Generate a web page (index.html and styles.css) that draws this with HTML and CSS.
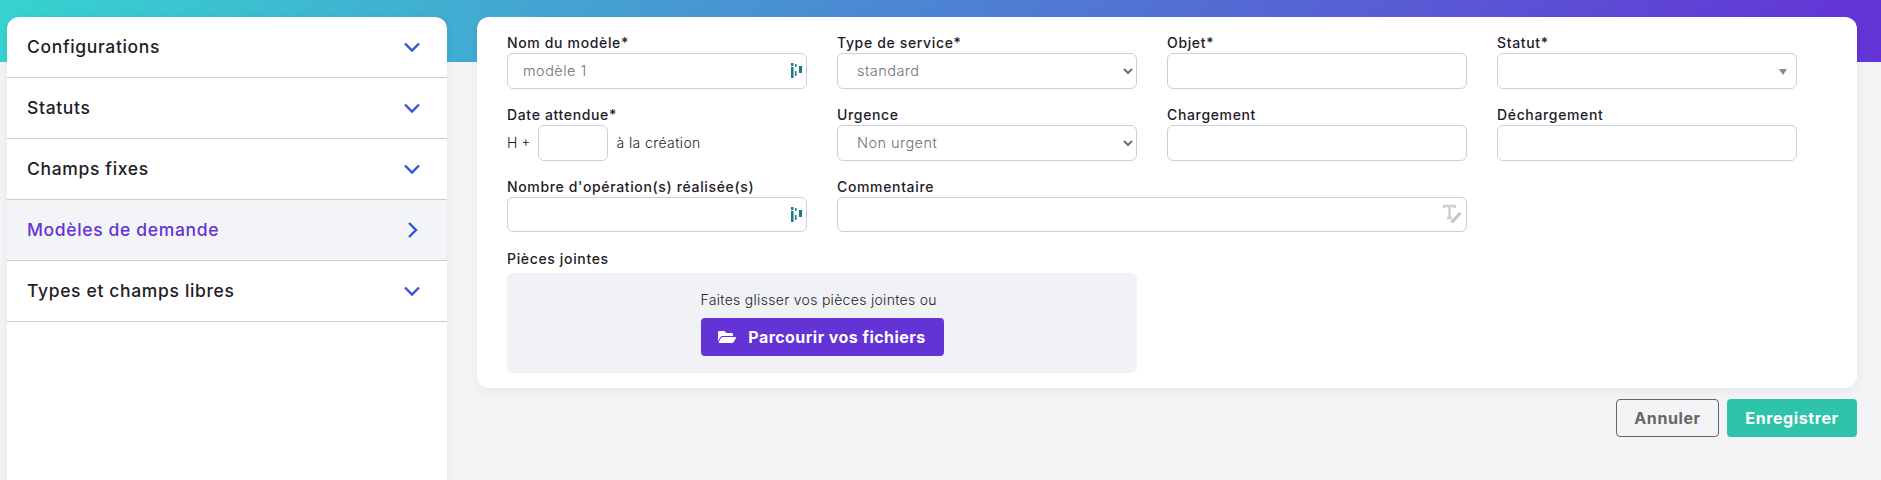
FILE: index.html
```html
<!doctype html>
<html>
<head>
<title>Modèles de demande</title>
<link rel="stylesheet" href="styles.css">
</head>
<body>
<div class="page">

  <!-- menu on the left -->
  <nav class="sidebar">
    <div class="menu-row">
      <span>Configurations</span>
      <svg class="chevron" viewBox="0 0 18 12"><path d="M2 2.5 9 9.5 16 2.5"/></svg>
    </div>
    <div class="menu-row">
      <span>Statuts</span>
      <svg class="chevron" viewBox="0 0 18 12"><path d="M2 2.5 9 9.5 16 2.5"/></svg>
    </div>
    <div class="menu-row">
      <span>Champs fixes</span>
      <svg class="chevron" viewBox="0 0 18 12"><path d="M2 2.5 9 9.5 16 2.5"/></svg>
    </div>
    <div class="menu-row active">
      <span>Modèles de demande</span>
      <svg class="chevron" viewBox="0 0 18 18"><path d="M6 2 13 9 6 16"/></svg>
    </div>
    <div class="menu-row">
      <span>Types et champs libres</span>
      <svg class="chevron" viewBox="0 0 18 12"><path d="M2 2.5 9 9.5 16 2.5"/></svg>
    </div>
  </nav>

  <main class="content">
    <form class="card">
      <div class="form-grid">

        <div class="field">
          <label>Nom du modèle*</label>
          <div class="input-wrap">
            <input class="control" type="text" value="modèle 1">
            <svg class="num-icon" viewBox="0 0 11 15">
              <rect x="0" y="0" width="2.5" height="3"/><rect x="0" y="4" width="2.5" height="11"/>
              <rect x="4" y="1" width="1.5" height="3"/><rect x="4" y="8" width="1.5" height="5"/>
              <rect x="8" y="3" width="3" height="7"/>
            </svg>
          </div>
        </div>

        <div class="field">
          <label>Type de service*</label>
          <select class="control select"><option>standard</option></select>
        </div>

        <div class="field">
          <label>Objet*</label>
          <input class="control" type="text">
        </div>

        <div class="field">
          <label>Statut*</label>
          <div class="input-wrap">
            <div class="control"></div>
            <span class="caret"></span>
          </div>
        </div>

        <div class="field">
          <label>Date attendue*</label>
          <div class="delay">
            <span class="delay-prefix">H +</span>
            <input class="control delay-input" type="text">
            <span>à la création</span>
          </div>
        </div>

        <div class="field">
          <label>Urgence</label>
          <select class="control select"><option>Non urgent</option></select>
        </div>

        <div class="field">
          <label>Chargement</label>
          <input class="control" type="text">
        </div>

        <div class="field">
          <label>Déchargement</label>
          <input class="control" type="text">
        </div>

        <div class="field">
          <label>Nombre d'opération(s) réalisée(s)</label>
          <div class="input-wrap">
            <input class="control short" type="text">
            <svg class="num-icon" viewBox="0 0 11 15">
              <rect x="0" y="0" width="2.5" height="3"/><rect x="0" y="4" width="2.5" height="11"/>
              <rect x="4" y="1" width="1.5" height="3"/><rect x="4" y="8" width="1.5" height="5"/>
              <rect x="8" y="3" width="3" height="7"/>
            </svg>
          </div>
        </div>

        <div class="field wide">
          <label>Commentaire</label>
          <div class="input-wrap">
            <input class="control short" type="text">
            <svg class="text-icon" viewBox="0 0 22 22">
              <path class="t-shape" d="M1 5V3H12V5M6.5 3V15M4 15H9"/>
              <path class="pen" d="M8.5 19.5 17.5 10"/>
            </svg>
          </div>
        </div>

        <div class="field wide attachments">
          <label>Pièces jointes</label>
          <div class="dropzone">
            <div class="drop-inner">
              <span>Faites glisser vos pièces jointes ou</span>
              <button class="browse" type="button">
                <svg class="folder" viewBox="0 0 576 512"><path d="M572.694 292.093L500.27 416.248A63.997 63.997 0 0 1 444.989 448H45.025c-18.523 0-30.064-20.093-20.731-36.093l72.424-124.155A64 64 0 0 1 152 256h399.964c18.523 0 30.064 20.093 20.73 36.093zM152 224h328v-48c0-26.51-21.49-48-48-48H272l-64-64H48C21.49 64 0 85.49 0 112v278.046l69.077-118.418C86.214 242.25 117.989 224 152 224z"/></svg>
                Parcourir vos fichiers
              </button>
            </div>
          </div>
        </div>

      </div>
    </form>

    <div class="actions">
      <button class="btn btn-cancel" type="button">Annuler</button>
      <button class="btn btn-save" type="button">Enregistrer</button>
    </div>
  </main>

</div>
</body>
</html>
```
FILE: styles.css
```css
* {
  box-sizing: border-box;
}

html, body {
  margin: 0;
  height: 100%;
}

body {
  font-family: Inter, "Open Sans", sans-serif;
  color: #1f2027;
  overflow: hidden;
}

/* the gradient band sits behind the sidebar and the card */
.page {
  display: flex;
  gap: 30px;
  height: 100vh;
  padding: 17px 24px 0 7px;
  background:
    linear-gradient(to right, #36d3d0, #6433d6) top left / 100% 62px no-repeat,
    #f4f4f7;
}

/* sidebar */
.sidebar {
  width: 440px;
  flex: none;
  background: #fff;
  border-radius: 12px 12px 0 0;
  box-shadow: 0 2px 10px rgba(0, 0, 0, 0.06);
  overflow: hidden;
}

.menu-row {
  display: flex;
  justify-content: space-between;
  align-items: center;
  height: 61px;
  padding: 0 26px 0 20px;
  border-bottom: 1px solid #cccccc;
  font-size: 17.5px;
  font-weight: 500;
  letter-spacing: 0.65px;
}

.menu-row span {
  margin-bottom: 2px;
}

.menu-row.active {
  background: #f3f4f7;
  color: #6433d6;
}

.chevron {
  width: 18px;
  height: 18px;
  fill: none;
  stroke: #3353d8;
  stroke-width: 2.4;
}

/* main card */
.content {
  flex: 1;
  min-width: 0;
}

.card {
  height: 371px;
  padding: 18px 30px 0;
  background: #fff;
  border-radius: 12px;
  box-shadow: 0 4px 12px rgba(0, 0, 0, 0.05);
}

.form-grid {
  display: grid;
  grid-template-columns: repeat(4, 300px);
  column-gap: 30px;
  row-gap: 0;
  align-content: start;
}

.field {
  height: 72px;
  display: flex;
  flex-direction: column;
}

.field.wide {
  grid-column: span 2;
}

.field.attachments {
  grid-column: 1 / span 2;
  height: auto;
}

.field label {
  height: 18px;
  line-height: 16px;
  font-size: 14px;
  font-weight: 500;
  letter-spacing: 0.65px;
  white-space: nowrap;
}

.attachments label {
  height: 22px;
}

.input-wrap {
  position: relative;
}

.control {
  display: block;
  width: 100%;
  height: 36px;
  padding: 0 15px 2px;
  border: 1px solid #ced0d8;
  border-radius: 6px;
  background: #fff;
  color: #6f7278;
  font-family: inherit;
  font-size: 14.5px;
  font-weight: 300;
  letter-spacing: 0.45px;
}

.control.short {
  height: 35px;
}

/* small icons inside the inputs */
.num-icon {
  position: absolute;
  right: 5px;
  top: 10px;
  width: 11px;
  height: 15px;
  fill: #17798a;
}

.text-icon {
  position: absolute;
  right: 2px;
  top: 6px;
  width: 22px;
  height: 22px;
  fill: none;
}

.t-shape {
  stroke: #cfcfcf;
  stroke-width: 2.4;
}

.pen {
  stroke: #c4c4c4;
  stroke-width: 3;
}

.caret {
  position: absolute;
  right: 10px;
  top: 16px;
  border-left: 4px solid transparent;
  border-right: 4px solid transparent;
  border-top: 6px solid #888;
}

.delay {
  display: flex;
  align-items: center;
  gap: 8px;
  font-size: 14px;
  font-weight: 300;
  letter-spacing: 0.4px;
}

.delay span {
  margin-bottom: 1px;
}

.delay .delay-prefix {
  letter-spacing: 0;
}

.delay-input {
  width: 70px;
}

/* attachments */
.dropzone {
  height: 100px;
  display: flex;
  justify-content: center;
  padding-top: 18px;
  background: #f1f2f6;
  border-radius: 6px;
  font-size: 14px;
  font-weight: 300;
  letter-spacing: 0.3px;
}

.drop-inner {
  display: flex;
  flex-direction: column;
  align-items: flex-start;
  gap: 10px;
}

.browse {
  display: flex;
  align-items: center;
  justify-content: center;
  gap: 12px;
  width: 243px;
  height: 38px;
  border: 0;
  border-radius: 4px;
  background: #6433d6;
  color: #fff;
  font-family: inherit;
  font-size: 16px;
  font-weight: 700;
  letter-spacing: 0.45px;
}

.folder {
  width: 18px;
  height: 16px;
  fill: #fff;
}

/* buttons under the card */
.actions {
  display: flex;
  justify-content: flex-end;
  gap: 8px;
  margin-top: 11px;
}

.btn {
  height: 38px;
  border-radius: 4px;
  font-family: inherit;
  font-size: 16px;
  font-weight: 700;
  letter-spacing: 0.6px;
}

.btn-cancel {
  width: 103px;
  border: 1px solid #666;
  background: transparent;
  color: #666;
}

.btn-save {
  width: 130px;
  border: 0;
  background: #2ec4a9;
  color: #fff;
}
```
